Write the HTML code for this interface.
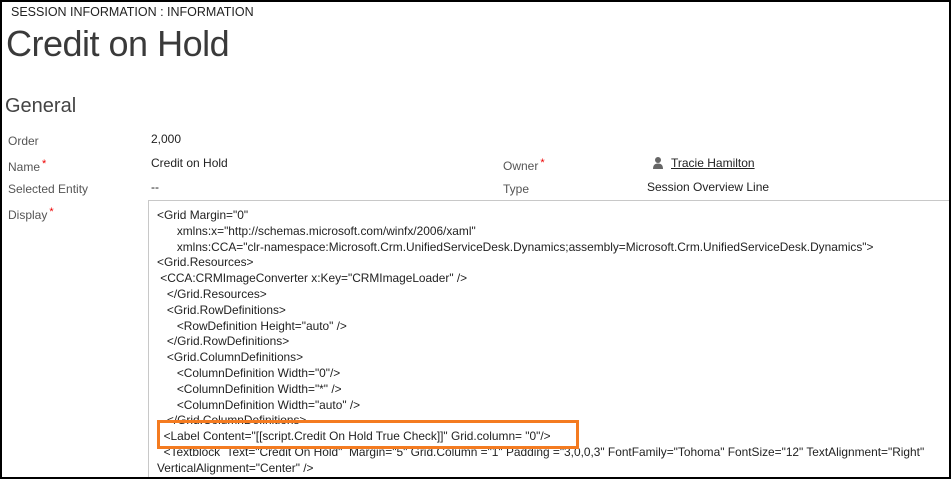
<!DOCTYPE html>
<html><head><meta charset="utf-8"><style>
html,body{margin:0;padding:0;width:951px;height:479px;overflow:hidden;}
body{position:relative;background:#fff;font-family:"Liberation Sans",sans-serif;color:#222;}
.frame{position:absolute;left:0;top:0;width:947px;height:475px;border:2px solid #000;z-index:5;}
.a{position:absolute;white-space:nowrap;font-size:12px;line-height:14px;}
.lbl{color:#555;}
.req{color:#e00;font-size:11px;vertical-align:4px;margin-left:2px;}
.box{position:absolute;left:148px;top:200px;width:810px;height:276px;border:1px solid #c8c8c8;border-bottom:none;}
.code{position:absolute;left:157px;top:208px;font-size:11.9px;line-height:15.8px;color:#222;white-space:pre;}
.orange{position:absolute;left:157px;top:420px;width:416px;height:23px;border:3px solid #f47b20;}
</style></head><body>
<div class="frame"></div>
<div class="a" style="left:11px;top:5px;font-size:12.5px;color:#222">SESSION INFORMATION : INFORMATION</div>
<div class="a" style="left:6px;top:22px;font-size:36px;line-height:44px;color:#3a3a3a;letter-spacing:-0.5px">Credit on Hold</div>
<div class="a" style="left:5px;top:94px;font-size:20px;line-height:24px;color:#444">General</div>
<div class="a lbl" style="left:8px;top:134px">Order</div>
<div class="a" style="left:151px;top:132px">2,000</div>
<div class="a lbl" style="left:8px;top:157px">Name<span class="req">*</span></div>
<div class="a" style="left:151px;top:156px">Credit on Hold</div>
<div class="a lbl" style="left:8px;top:182px">Selected Entity</div>
<div class="a" style="left:151px;top:180px">--</div>
<div class="a lbl" style="left:8px;top:205px">Display<span class="req">*</span></div>
<div class="a lbl" style="left:503px;top:156px">Owner<span class="req">*</span></div>
<svg style="position:absolute;left:652px;top:156px" width="12" height="14" viewBox="0 0 12 14"><circle cx="6" cy="4" r="3" fill="#666"/><path d="M1 13 Q1 7.5 6 7.5 Q11 7.5 11 13 Z" fill="#666"/></svg>
<div class="a" style="left:671px;top:156px;text-decoration:underline;color:#222">Tracie Hamilton</div>
<div class="a lbl" style="left:503px;top:182px">Type</div>
<div class="a" style="left:647px;top:180px">Session Overview Line</div>
<div class="box"></div>
<div class="code">&lt;Grid Margin="0"
      xmlns:x="http://schemas.microsoft.com/winfx/2006/xaml"
      xmlns:CCA="clr-namespace:Microsoft.Crm.UnifiedServiceDesk.Dynamics;assembly=Microsoft.Crm.UnifiedServiceDesk.Dynamics"&gt;
&lt;Grid.Resources&gt;
 &lt;CCA:CRMImageConverter x:Key="CRMImageLoader" /&gt;
   &lt;/Grid.Resources&gt;
   &lt;Grid.RowDefinitions&gt;
      &lt;RowDefinition Height="auto" /&gt;
   &lt;/Grid.RowDefinitions&gt;
   &lt;Grid.ColumnDefinitions&gt;
      &lt;ColumnDefinition Width="0"/&gt;
      &lt;ColumnDefinition Width="*" /&gt;
      &lt;ColumnDefinition Width="auto" /&gt;
   &lt;/Grid.ColumnDefinitions&gt;
  &lt;Label Content="[[script.Credit On Hold True Check]]" Grid.column= "0"/&gt;
  &lt;Textblock  Text="Credit On Hold"  Margin="5" Grid.Column ="1" Padding ="3,0,0,3" FontFamily="Tohoma" FontSize="12" TextAlignment="Right"
VerticalAlignment="Center" /&gt;</div>
<div class="orange"></div>
</body></html>
